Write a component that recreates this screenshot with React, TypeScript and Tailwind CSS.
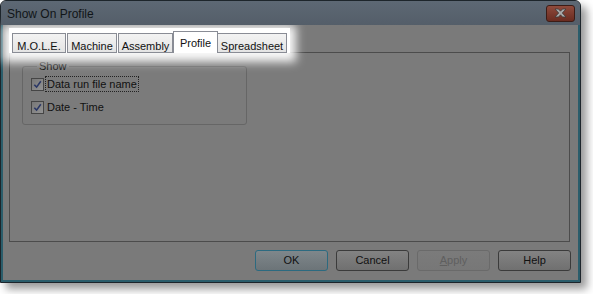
import React from "react";

const tabs = [
  { label: "M.O.L.E.", w: "w-[54px]", ml: "ml-0" },
  { label: "Machine", w: "w-[50px]", ml: "ml-px" },
  { label: "Assembly", w: "w-[55px]", ml: "ml-px" },
  { label: "Profile", w: "w-[45px]", ml: "ml-0", active: true },
  { label: "Spreadsheet", w: "w-[70px]", ml: "-ml-px" },
];

const font = "font-['Liberation_Sans',Arial,sans-serif]";

const CheckMark = () => (
  <svg width="9" height="9" viewBox="0 0 9 9">
    <path d="M1.3 4.7 L3.6 7.1 L7.8 1.3" fill="none" stroke="#2a3766" strokeWidth="1.6" />
  </svg>
);

const Check = ({ label, focused }: { label: string; focused?: boolean }) => (
  <div className="flex h-[16px] items-center">
    <div className="flex h-[13px] w-[13px] items-center justify-center border border-[#454545] bg-gradient-to-br from-[#777777] to-[#939393]">
      <CheckMark />
    </div>
    <span
      className={
        "ml-px px-px leading-[14px] text-[#111] " +
        (focused ? "border border-dotted border-[#222]" : "border border-transparent")
      }
    >
      {label}
    </span>
  </div>
);

const DlgButton = ({
  children,
  kind,
}: {
  children: React.ReactNode;
  kind?: "default" | "disabled";
}) => {
  let cls = "border-[#3b3b3b] from-[#838383] to-[#707070] text-[#111]";
  if (kind === "default") cls = "border-[#2c6a80] from-[#7f878b] to-[#6c7478] text-[#111]";
  if (kind === "disabled") cls = "border-[#6a6a6a] from-[#7b7b7b] to-[#777777] text-[#5f5f5f]";
  return (
    <div
      className={
        "flex h-[21px] w-[73px] items-center justify-center rounded-[3px] border bg-gradient-to-b " + cls
      }
    >
      {children}
    </div>
  );
};

export default function App() {
  return (
    <div className={"h-[294px] w-[593px] bg-white text-[11px] " + font}>
      <div className="flex h-[283px] w-[581px] flex-col rounded-t-[6px] border border-[#1d252b] bg-[#7a7a7a] shadow-[6px_6px_8px_rgba(0,0,0,0.4)]">
        {/* title bar */}
        <div className="relative z-20 flex h-[24px] shrink-0 items-center justify-between rounded-t-[5px] bg-gradient-to-b from-[#5d6874] to-[#545e69] pl-[6px] pr-[5px]">
          <span className="pt-px text-[12px] text-[#111518]">Show On Profile</span>
          <div className="flex h-[17px] w-[29px] items-center justify-center rounded-[3px] border border-[#3c1c16] bg-gradient-to-b from-[#8f4b3d] to-[#6a2b20]">
            <svg width="13" height="10" viewBox="0 0 13 10">
              <path
                d="M1 1 H4.5 L6.5 3.2 L8.5 1 H12 L8.3 5 L12 9 H8.5 L6.5 6.8 L4.5 9 H1 L4.7 5 Z"
                fill="#a8a8a8"
                stroke="#3a3a3a"
                strokeWidth="0.8"
              />
            </svg>
          </div>
        </div>

        {/* body */}
        <div className="flex flex-1 flex-col border-x-2 border-b-2 border-[#2b5d6b]">
          <div className="ml-[6px] mt-[3px] flex flex-col">
            {/* tab strip, spotlighted */}
            <div className="relative z-10 -mb-px flex h-[25px] w-[281px] items-end bg-white pl-[3px] shadow-[0_3px_9px_6px_rgba(255,255,255,0.95)]">
              {tabs.map((t) => (
                <div
                  key={t.label}
                  className={
                    "flex shrink-0 justify-center border-x border-t border-[#898c95] text-[#111] " +
                    t.w +
                    " " +
                    t.ml +
                    (t.active
                      ? " relative z-10 h-[22px] items-start bg-white pt-[3px]"
                      : " h-[20px] items-start border-b bg-gradient-to-b from-[#f3f3f3] to-[#e4e4e4] pt-[4px]")
                  }
                >
                  {t.label}
                </div>
              ))}
            </div>

            {/* panel */}
            <div className="flex h-[190px] w-[561px] flex-col border border-[#4c4c4c] bg-[#7b7b7b]">
              <fieldset className="ml-[12px] mt-[7px] w-[225px] rounded-[3px] border border-[#666666] pb-[9px] pl-[8px]">
                <legend className="ml-[6px] px-[2px] leading-[13px] text-[#111]">Show</legend>
                <div className="mt-[3px] flex flex-col gap-[7px]">
                  <Check label="Data run file name" focused />
                  <Check label="Date - Time" />
                </div>
              </fieldset>
            </div>
          </div>

          {/* buttons */}
          <div className="mr-[7px] mt-[8px] flex justify-end gap-[8px]">
            <DlgButton kind="default">OK</DlgButton>
            <DlgButton>Cancel</DlgButton>
            <DlgButton kind="disabled">
              <span>
                <span className="underline">A</span>pply
              </span>
            </DlgButton>
            <DlgButton>Help</DlgButton>
          </div>
        </div>
      </div>
    </div>
  );
}
